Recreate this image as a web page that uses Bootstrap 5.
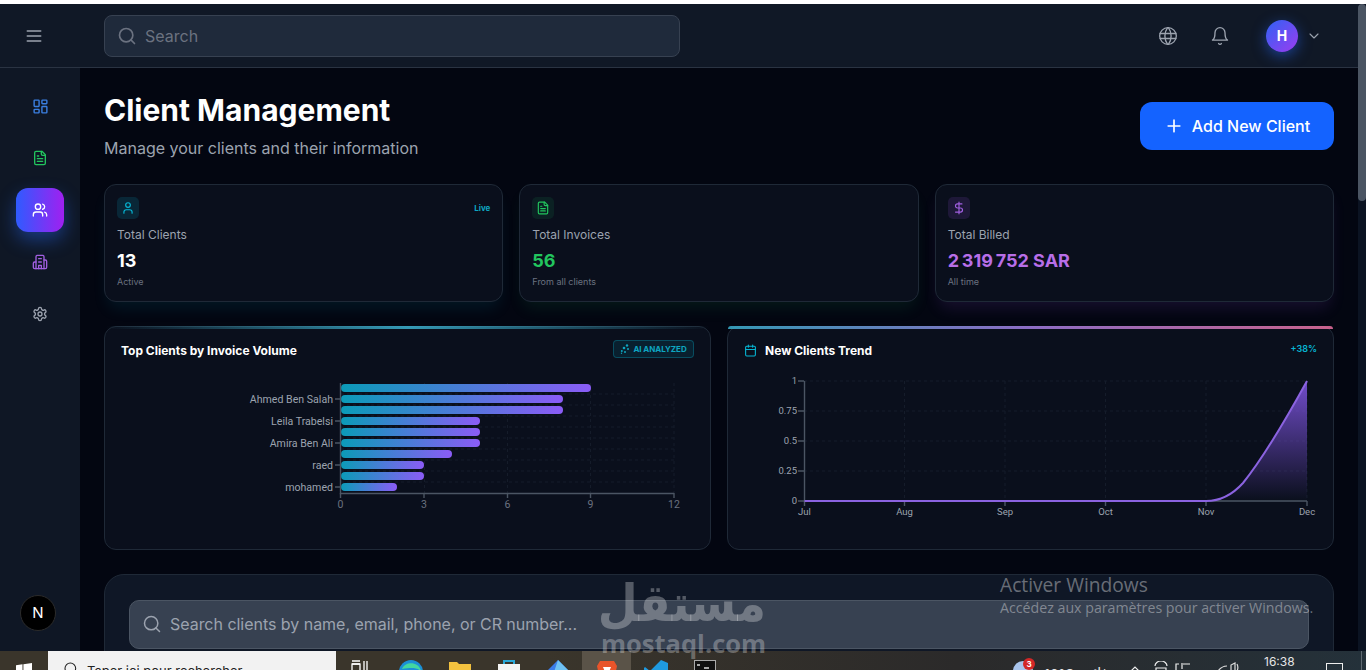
<!doctype html>
<html lang="en">
<head>
<meta charset="utf-8">
<title>Client Management</title>
<link href="https://cdn.jsdelivr.net/npm/bootstrap@5.3.0/dist/css/bootstrap.min.css" rel="stylesheet">
<style>
html,body{height:670px;overflow:hidden}
body{font-family:Inter,"Liberation Sans",sans-serif;background:#030611;color:#fff}
.ico{fill:none;stroke:currentColor;stroke-width:2;stroke-linecap:round;stroke-linejoin:round;display:block;flex:none}
.top-strip{height:4px;background:#fff;flex:none}
.shell{min-height:0}
.app-col{min-width:0}
.scroll-track{width:8px;background:#0b1322;flex:none}
.scroll-thumb{height:197px;background:#4b5563;border-radius:4px}
.app-head{height:64px;background:#101826;border-bottom:1px solid #2a3342;flex:none}
.menu-cell{width:80px;color:#9ca3af;padding-left:24px}
.head-search{width:576px;height:42px;background:#1f2a3b;border:1px solid #374151;border-radius:8px;color:#6b7280;font-size:16px;padding:0 12px}
.head-ico{color:#9ca3af;margin-right:12px}
.globe-cell{margin-right:32px}
.bell-cell{margin-right:36px}
.avatar{width:32px;height:32px;border-radius:50%;background:linear-gradient(135deg,#2f62f5,#9b3cf0);box-shadow:0 4px 14px rgba(37,99,235,.55);font-size:14px;font-weight:700}
.side{width:80px;background:#0f1725;flex:none;padding-top:16px}
.side-item{width:48px;height:44px;border-radius:12px;margin-bottom:8px}
.side-on{background:linear-gradient(90deg,#2f5bff,#a020f0);box-shadow:0 8px 18px rgba(37,99,235,.45);color:#fff}
.c-blue{color:#3b7fe0}.c-green{color:#22c55e}.c-purple{color:#a15fe0}.c-gray{color:#9ca3af}.c-cyan{color:#06b6d4}
.next-dot{width:36px;height:36px;border-radius:50%;background:#000;border:1px solid #2b2b2b;margin:auto 0 20px 20px;font-size:15px;font-weight:400}
.page{padding:24px;min-width:0;background:#030611}
.page-title{font-size:30px;line-height:36px;font-weight:700;margin:0 0 8px;color:#fff}
.page-sub{font-size:16px;line-height:24px;color:#9ca3af;margin:0}
.add-btn{width:194px;height:48px;background:#1463ff;border-radius:12px;font-size:16px;font-weight:500;color:#fff;border:0;gap:8px}
.add-btn:hover{background:#1463ff;color:#fff}
.stat-box{height:118px;background:#0a0f1c;border:1px solid #1f2937;border-radius:12px;padding:12px}
.glow-cyan{box-shadow:0 10px 16px -4px rgba(6,182,212,.10)}
.glow-green{box-shadow:0 10px 16px -4px rgba(34,197,94,.10)}
.glow-purple{box-shadow:0 10px 16px -4px rgba(168,85,247,.13)}
.ico-box{width:22px;height:22px;border-radius:5px}
.bg-cy{background:rgba(6,182,212,.15)}.bg-gr{background:rgba(34,197,94,.10)}.bg-pu{background:rgba(168,85,247,.13)}
.live-tag{font-size:8px;font-weight:700;color:#0ea5c0;line-height:12px}
.stat-label{font-size:12px;line-height:16px;color:#9ca3af;margin-top:8px}
.stat-val{font-size:18px;line-height:28px;font-weight:700;margin-top:4px}
.stat-note{font-size:9px;line-height:12px;color:#6b7280;margin-top:1px}
.val-green{color:#22c55e}.val-purple{color:#b86ee8}
.chart-box{height:224px;background:#0a0f1c;border:1px solid #1f2937;border-radius:12px;position:relative}
.chart-line{position:absolute;left:0;right:0;top:-1px;height:3px;border-radius:12px 12px 0 0;opacity:.85}
.line-a{background:linear-gradient(90deg,transparent,#3bb0cf,transparent)}
.line-b{background:linear-gradient(90deg,#3bb0cf,#a27ce0 50%,#e8709f)}
.chart-head{height:44px;padding:3px 16px 0;font-size:12px;font-weight:700;letter-spacing:0}
.ai-badge{width:81px;height:18px;margin-top:-3px;border:1px solid rgba(6,182,212,.3);background:rgba(6,182,212,.1);border-radius:4px;color:#0ea5c0;font-size:8px;font-weight:700;gap:3px;letter-spacing:-.05px}
.trend-tag{font-size:9px;font-weight:600;color:#06b6d4;margin-top:-3px}
.plot{display:block}
.plot text{font-family:Roboto,Inter,sans-serif}
.grid-faint{stroke:#151c2a;stroke-dasharray:3 3;stroke-width:1;fill:none}
.find-panel{margin-top:24px;background:#0f1726;border:1px solid #1f2937;border-radius:20px;padding:25px 24px}
.find-input{height:49px;background:#374151;border:1px solid #4b5563;border-radius:10px;padding:0 12px 2px;color:#9ca3af;font-size:16px;gap:8px;letter-spacing:-.03px}
.taskbar{height:19px;flex:none;overflow:hidden;background:linear-gradient(90deg,#3a352b 0,#3a352b 40%,#2b2a2a 70%,#24313a 100%)}
.task-start{width:48px;padding-top:12px}
.task-search{width:288px;height:19px;background:#f2f2f2;color:#222;font-size:13px;padding:11px 0 0 15px;gap:8px;white-space:nowrap;overflow:hidden}
.task-search .ico{margin-top:-1px}
.task-cell{width:49px;height:19px;padding-top:9px;overflow:hidden}
.task-first{width:50px;padding-right:2px}
.task-sel{background:#5a5348}
.tray{color:#e6e6e6;font-size:12px;position:relative;flex:1;height:19px}
.tray-item{position:absolute;white-space:nowrap}
.tray-badge{left:294px;top:7px;width:12px;height:12px;border-radius:50%;background:#d32727;color:#fff;font-size:8px;font-weight:700;line-height:12px;text-align:center}
.wm{position:absolute;left:601px;top:575px;width:165px;color:rgba(255,255,255,.29);text-align:center;pointer-events:none}
.wm-ar{font-family:"DejaVu Sans",sans-serif;font-weight:700;font-size:46px;line-height:55px;height:55px;transform:scaleY(1.12);transform-origin:50% 30%}
.wm-en{font-family:"Open Sans",sans-serif;font-weight:700;font-size:25.5px;line-height:28px;margin-top:-1px}
.activate{position:absolute;left:1000px;top:573px;color:rgba(255,255,255,.38);font-family:"Open Sans",sans-serif;pointer-events:none;white-space:nowrap}
.act-a{font-size:19.2px;line-height:24px}
.act-b{font-size:14.2px;line-height:20px;margin-top:1px}
</style>
</head>
<body class="d-flex flex-column">
<div class="top-strip"></div>
<div class="shell d-flex flex-grow-1">
  <div class="app-col d-flex flex-column flex-grow-1">
    <header class="app-head d-flex align-items-center">
      <div class="menu-cell d-flex">
        <svg class="ico" width="20" height="20" viewBox="0 0 24 24"><path d="M4 6h16M4 12h16M4 18h16"/></svg>
      </div>
      <div class="head-search ms-4 d-flex align-items-center gap-2">
        <svg class="ico" width="20" height="20" viewBox="0 0 24 24"><circle cx="11" cy="11" r="8"/><path d="m21 21-4.3-4.3"/></svg>
        <span>Search</span>
      </div>
      <div class="ms-auto d-flex align-items-center pe-4 head-ico">
        <div class="globe-cell"><svg class="ico" style="stroke-width:1.6" width="20" height="20" viewBox="0 0 24 24"><circle cx="12" cy="12" r="10"/><path d="M2.6 9h18.8M2.6 15h18.8M11.5 2a17 17 0 0 0 0 20M12.5 2a17 17 0 0 1 0 20"/></svg></div>
        <div class="bell-cell"><svg class="ico" style="stroke-width:1.6" width="20" height="20" viewBox="0 0 24 24"><path d="M6 8a6 6 0 0 1 12 0c0 7 3 9 3 9H3s3-2 3-9"/><path d="M10.3 21a1.94 1.94 0 0 0 3.4 0"/></svg></div>
        <div class="avatar d-flex align-items-center justify-content-center text-white">H</div>
        <svg class="ico ms-2" width="16" height="16" viewBox="0 0 24 24" style="stroke-width:1.6"><path d="m6 9 6 6 6-6"/></svg>
      </div>
    </header>
    <div class="d-flex flex-grow-1 overflow-hidden" style="min-height:0">
      <aside class="side d-flex flex-column align-items-center">
        <div class="side-item d-flex align-items-center justify-content-center c-blue"><svg class="ico" width="17" height="17" viewBox="0 0 24 24"><rect x="3" y="3" width="7" height="9" rx="1"/><rect x="14" y="3" width="7" height="5" rx="1"/><rect x="14" y="12" width="7" height="9" rx="1"/><rect x="3" y="16" width="7" height="5" rx="1"/></svg></div>
        <div class="side-item d-flex align-items-center justify-content-center c-green"><svg class="ico" width="16" height="16" viewBox="0 0 24 24"><path d="M15 2H6a2 2 0 0 0-2 2v16a2 2 0 0 0 2 2h12a2 2 0 0 0 2-2V7Z"/><path d="M14 2v4a2 2 0 0 0 2 2h4M10 9H8M16 13H8M16 17H8"/></svg></div>
        <div class="side-item side-on d-flex align-items-center justify-content-center"><svg class="ico" width="16" height="16" viewBox="0 0 24 24"><path d="M16 21v-2a4 4 0 0 0-4-4H6a4 4 0 0 0-4 4v2"/><circle cx="9" cy="7" r="4"/><path d="M22 21v-2a4 4 0 0 0-3-3.87M16 3.13a4 4 0 0 1 0 7.75"/></svg></div>
        <div class="side-item d-flex align-items-center justify-content-center c-purple"><svg class="ico" width="16" height="16" viewBox="0 0 24 24"><path d="M6 22V4a2 2 0 0 1 2-2h8a2 2 0 0 1 2 2v18Z"/><path d="M6 12H4a2 2 0 0 0-2 2v6a2 2 0 0 0 2 2h2M18 9h2a2 2 0 0 1 2 2v9a2 2 0 0 1-2 2h-2M10 7h4M10 12h4M10 22v-5h4v5"/></svg></div>
        <div class="side-item d-flex align-items-center justify-content-center c-gray"><svg class="ico" width="16" height="16" viewBox="0 0 24 24"><path d="M12.22 2h-.44a2 2 0 0 0-2 2v.18a2 2 0 0 1-1 1.73l-.43.25a2 2 0 0 1-2 0l-.15-.08a2 2 0 0 0-2.73.73l-.22.38a2 2 0 0 0 .73 2.73l.15.1a2 2 0 0 1 1 1.72v.51a2 2 0 0 1-1 1.74l-.15.09a2 2 0 0 0-.73 2.73l.22.38a2 2 0 0 0 2.73.73l.15-.08a2 2 0 0 1 2 0l.43.25a2 2 0 0 1 1 1.73V20a2 2 0 0 0 2 2h.44a2 2 0 0 0 2-2v-.18a2 2 0 0 1 1-1.73l.43-.25a2 2 0 0 1 2 0l.15.08a2 2 0 0 0 2.73-.73l.22-.39a2 2 0 0 0-.73-2.73l-.15-.08a2 2 0 0 1-1-1.74v-.5a2 2 0 0 1 1-1.74l.15-.09a2 2 0 0 0 .73-2.73l-.22-.38a2 2 0 0 0-2.73-.73l-.15.08a2 2 0 0 1-2 0l-.43-.25a2 2 0 0 1-1-1.73V4a2 2 0 0 0-2-2z"/><circle cx="12" cy="12" r="3"/></svg></div>
        <div class="next-dot d-flex align-items-center justify-content-center align-self-start text-white">N</div>
      </aside>
      <main class="page flex-grow-1 overflow-hidden">
        <div class="d-flex justify-content-between align-items-center" style="margin-bottom:24px">
          <div>
            <h1 class="page-title">Client Management</h1>
            <p class="page-sub">Manage your clients and their information</p>
          </div>
          <button class="btn add-btn d-flex align-items-center justify-content-center">
            <svg class="ico" width="20" height="20" viewBox="0 0 24 24"><path d="M5 12h14M12 5v14"/></svg>
            <span>Add New Client</span>
          </button>
        </div>
        <div class="row g-3" style="margin-bottom:24px">
          <div class="col-4">
            <div class="stat-box glow-cyan">
              <div class="d-flex justify-content-between align-items-center">
                <div class="ico-box bg-cy d-flex align-items-center justify-content-center c-cyan"><svg class="ico" width="14" height="14" viewBox="0 0 24 24"><path d="M19 21v-2a4 4 0 0 0-4-4H9a4 4 0 0 0-4 4v2"/><circle cx="12" cy="7" r="4"/></svg></div>
                <span class="live-tag">Live</span>
              </div>
              <div class="stat-label">Total Clients</div>
              <div class="stat-val">13</div>
              <div class="stat-note">Active</div>
            </div>
          </div>
          <div class="col-4">
            <div class="stat-box glow-green">
              <div class="ico-box bg-gr d-flex align-items-center justify-content-center c-green"><svg class="ico" width="14" height="14" viewBox="0 0 24 24"><path d="M15 2H6a2 2 0 0 0-2 2v16a2 2 0 0 0 2 2h12a2 2 0 0 0 2-2V7Z"/><path d="M14 2v4a2 2 0 0 0 2 2h4M10 9H8M16 13H8M16 17H8"/></svg></div>
              <div class="stat-label">Total Invoices</div>
              <div class="stat-val val-green">56</div>
              <div class="stat-note">From all clients</div>
            </div>
          </div>
          <div class="col-4">
            <div class="stat-box glow-purple">
              <div class="ico-box bg-pu d-flex align-items-center justify-content-center c-purple"><svg class="ico" width="14" height="14" viewBox="0 0 24 24"><path d="M12 2v20M17 5H9.5a3.5 3.5 0 0 0 0 7h5a3.5 3.5 0 0 1 0 7H6"/></svg></div>
              <div class="stat-label">Total Billed</div>
              <div class="stat-val val-purple">2&#8239;319&#8239;752 SAR</div>
              <div class="stat-note">All time</div>
            </div>
          </div>
        </div>
        <div class="row g-3">
          <div class="col-6">
            <div class="chart-box">
              <div class="chart-line line-a"></div>
              <div class="chart-head d-flex align-items-center justify-content-between">
                <span>Top Clients by Invoice Volume</span>
                <span class="ai-badge d-flex align-items-center justify-content-center"><svg width="10" height="10" viewBox="0 0 10 10" fill="currentColor"><circle cx="7" cy="1.5" r="1.2"/><circle cx="4" cy="4" r="1.3"/><circle cx="8" cy="5" r="1"/><circle cx="1.8" cy="7" r="1"/><circle cx="5" cy="8" r="1"/><circle cx="1.5" cy="9.2" r=".7"/></svg>AI ANALYZED</span>
              </div>
              <svg class="plot" width="605" height="178" viewBox="105 371 605 178">
                <defs><linearGradient id="bar" x1="0" x2="1" y1="0" y2="0"><stop offset="0" stop-color="#0b9bb8"/><stop offset="1" stop-color="#8b5cf6"/></linearGradient></defs>
                <path class="grid-faint" d="M424.5 383v110M507.5 383v110M590.5 383v110M674 383v110M341 394h333M341 405h333M341 416h333M341 427h333M341 438h333M341 449h333M341 460h333M341 471h333M341 482h333"/>
                <g fill="url(#bar)">
                  <rect x="341" y="384" width="250" height="8" rx="4"/><rect x="341" y="395" width="222" height="8" rx="4"/><rect x="341" y="406" width="222" height="8" rx="4"/><rect x="341" y="417" width="139" height="8" rx="4"/><rect x="341" y="428" width="139" height="8" rx="4"/><rect x="341" y="439" width="139" height="8" rx="4"/><rect x="341" y="450" width="111" height="8" rx="4"/><rect x="341" y="461" width="83" height="8" rx="4"/><rect x="341" y="472" width="83" height="8" rx="4"/><rect x="341" y="483" width="56" height="8" rx="4"/>
                </g>
                <g stroke="#4b5563" stroke-width="1.4" fill="none">
                  <path d="M340.5 383v110.5H674"/>
                  <path d="M335 399h5M335 421h5M335 443h5M335 465h5M335 487h5M340.5 493v5M424 493v5M507.5 493v5M590.5 493v5M674 493v5"/>
                </g>
                <g fill="#9ca3af" font-size="10.6" text-anchor="end">
                  <text x="333" y="403">Ahmed Ben Salah</text><text x="333" y="425">Leila Trabelsi</text><text x="333" y="447">Amira Ben Ali</text><text x="333" y="469">raed</text><text x="333" y="491">mohamed</text>
                </g>
                <g fill="#6b7280" font-size="10.5" text-anchor="middle">
                  <text x="340.5" y="508">0</text><text x="424" y="508">3</text><text x="507.5" y="508">6</text><text x="590.5" y="508">9</text><text x="674" y="508">12</text>
                </g>
              </svg>
            </div>
          </div>
          <div class="col-6">
            <div class="chart-box">
              <div class="chart-line line-b"></div>
              <div class="chart-head d-flex align-items-center justify-content-between">
                <span class="d-flex align-items-center gap-2"><svg class="ico c-cyan" width="13" height="13" viewBox="0 0 24 24"><path d="M8 2v4M16 2v4M3 10h18"/><rect x="3" y="4" width="18" height="18" rx="2"/></svg><span>New Clients Trend</span></span>
                <span class="trend-tag">+38%</span>
              </div>
              <svg class="plot" width="605" height="178" viewBox="728 371 605 178">
                <defs><linearGradient id="fillp" x1="0" x2="0" y1="0" y2="1"><stop offset="0" stop-color="#8b5cf6" stop-opacity=".8"/><stop offset="1" stop-color="#8b5cf6" stop-opacity="0"/></linearGradient></defs>
                <path class="grid-faint" d="M904.5 381v120M1005 381v120M1105.5 381v120M1206 381v120M1307 381v120M804 381h503M804 411h503M804 441h503M804 471h503"/>
                <path d="M1206 501C1222 501 1234 493 1243 483C1260 462 1285 421 1307 381V501Z" fill="url(#fillp)"/>
                <g stroke="#4b5563" stroke-width="1.4" fill="none">
                  <path d="M804.5 381v120H1307"/>
                  <path d="M798 381h6M798 411h6M798 441h6M798 471h6M798 501h6M804.5 501v5M904.5 501v5M1005 501v5M1105.5 501v5M1206 501v5M1307 501v5"/>
                </g>
                <path d="M804.5 501H1206C1222 501 1234 493 1243 483C1260 462 1285 421 1307 381" fill="none" stroke="#8b63e0" stroke-width="2"/>
                <g fill="#9ca3af" font-size="9.5" text-anchor="end">
                  <text x="797" y="384">1</text><text x="797" y="414">0.75</text><text x="797" y="444">0.5</text><text x="797" y="474">0.25</text><text x="797" y="504">0</text>
                </g>
                <g fill="#9ca3af" font-size="9.5" text-anchor="middle">
                  <text x="804.5" y="515">Jul</text><text x="904.5" y="515">Aug</text><text x="1005" y="515">Sep</text><text x="1105.5" y="515">Oct</text><text x="1206" y="515">Nov</text><text x="1307" y="515">Dec</text>
                </g>
              </svg>
            </div>
          </div>
        </div>
        <section class="find-panel">
          <div class="find-input d-flex align-items-center">
            <svg class="ico" width="20" height="20" viewBox="0 0 24 24" style="stroke-width:1.8"><circle cx="11" cy="11" r="8"/><path d="m21 21-4.3-4.3"/></svg>
            <span>Search clients by name, email, phone, or CR number...</span>
          </div>
        </section>
      </main>
    </div>
  </div>
  <div class="scroll-track"><div class="scroll-thumb"></div></div>
</div>
<footer class="taskbar d-flex">
  <div class="task-start d-flex justify-content-center">
    <svg width="16" height="16" viewBox="0 0 16 16" fill="#fff"><path d="M0 2.2 6.5 1.3V7.5H0ZM7.4 1.2 16 0V7.5H7.4ZM0 8.4H6.5V14.6L0 13.7ZM7.4 8.4H16V16L7.4 14.8Z"/></svg>
  </div>
  <div class="task-search d-flex align-items-start">
    <svg class="ico" style="stroke-width:1.6" width="16" height="16" viewBox="0 0 24 24"><circle cx="11" cy="11" r="8"/><path d="m21 21-4.3-4.3"/></svg>
    <span>Taper ici pour rechercher</span>
  </div>
  <div class="task-cell task-first d-flex justify-content-center"><svg width="18" height="14" viewBox="0 0 18 14" fill="none" stroke="#fff" stroke-width="1.3"><path d="M1 1h8M1 4h8"/><rect x="1" y="4" width="8" height="10"/><path d="M13 1v10M16 1v10"/></svg></div>
  <div class="task-cell d-flex justify-content-center"><svg width="24" height="24" viewBox="0 0 24 24"><circle cx="12" cy="12" r="12" fill="#1b8fd6"/><path d="M3 9C6 1 20 1 22 11c-5-4-11-3-19-2Z" fill="#43d6a0"/></svg></div>
  <div class="task-cell d-flex justify-content-center"><svg width="22" height="20" viewBox="0 0 22 20"><path d="M0 2h8l2 2h12v16H0Z" fill="#f3c23f"/></svg></div>
  <div class="task-cell d-flex justify-content-center"><svg width="22" height="20" viewBox="0 0 22 20"><path d="M6 4V1h10v3" fill="none" stroke="#2ba8d8" stroke-width="2"/><rect y="4" width="22" height="16" fill="#f4f4f4"/></svg></div>
  <div class="task-cell d-flex justify-content-center"><svg width="24" height="20" viewBox="0 0 24 20"><path d="M12 0 24 12 12 24 0 12Z" fill="#3a7be8"/><path d="M12 0 24 12H8Z" fill="#6ec1f2"/></svg></div>
  <div class="task-cell task-sel d-flex justify-content-center"><svg width="20" height="20" viewBox="0 0 20 20"><path d="M3 1h14l3 5-3 14H3L0 6Z" fill="#e8542a"/><path d="M6 7h8l-2 5h-4Z" fill="#fff"/></svg></div>
  <div class="task-cell d-flex justify-content-center"><svg width="24" height="20" viewBox="0 0 24 20"><path d="M17 0 24 3V20L17 24 6 13 1 17 0 16V8L1 7 6 11Z" fill="#1f9ae0"/></svg></div>
  <div class="task-cell d-flex justify-content-center"><svg width="22" height="20" viewBox="0 0 22 20"><rect x=".5" y=".5" width="21" height="19" fill="#111" stroke="#aaa"/><path d="M3 5h3M10 8h5" stroke="#ddd" stroke-width="1.3"/></svg></div>
  <div class="tray">
    <svg class="tray-item" style="left:283px;top:9px" width="22" height="22" viewBox="0 0 22 22"><circle cx="11" cy="11" r="10" fill="#a9c4ec"/></svg>
    <span class="tray-item tray-badge">3</span>
    <span class="tray-item" style="left:315px;top:13px;font-size:14px">16°C</span>
    <span class="tray-item" style="left:355px;top:12px;font-size:14px;font-family:'DejaVu Sans',sans-serif">غائم</span>
    <svg class="tray-item" style="left:400px;top:14px" width="12" height="8" viewBox="0 0 12 8" fill="none" stroke="#eee" stroke-width="1.2"><path d="m2 6 4-4 4 4"/></svg>
    <svg class="tray-item" style="left:424px;top:10px" width="16" height="12" viewBox="0 0 16 12" fill="none" stroke="#eee" stroke-width="1.2"><path d="M2 5a6 5 0 0 1 12 0M3 7h10v6H3Z"/></svg>
    <svg class="tray-item" style="left:445px;top:12px" width="18" height="10" viewBox="0 0 18 10" fill="none" stroke="#eee" stroke-width="1.2"><path d="M2 10V1h3M9 1h7"/><path d="M8 0v6"/></svg>
    <svg class="tray-item" style="left:488px;top:11px" width="22" height="10" viewBox="0 0 22 10" fill="none" stroke="#ddd" stroke-width="1.2"><path d="M1 9C4 5 7 4 10 4M14 8V3L18 1V10M20 2c1 2 1 5 0 7"/></svg>
    <span class="tray-item" style="left:535px;top:2px;font-size:12px">16:38</span>
    <svg class="tray-item" style="left:597px;top:12px" width="17" height="16" viewBox="0 0 17 16" fill="none" stroke="#eee" stroke-width="1"><rect x=".5" y=".5" width="16" height="15"/></svg>
    <div class="tray-item" style="left:632px;top:0;width:1px;height:19px;background:#5f6a72"></div>
  </div>
</footer>
<div class="wm"><div class="wm-ar" dir="rtl" lang="ar">مستقل</div><div class="wm-en">mostaql.com</div></div>
<div class="activate"><div class="act-a">Activer Windows</div><div class="act-b">Accédez aux paramètres pour activer Windows.</div></div>
<script src="https://cdn.jsdelivr.net/npm/bootstrap@5.3.0/dist/js/bootstrap.bundle.min.js"></script>
</body>
</html>
